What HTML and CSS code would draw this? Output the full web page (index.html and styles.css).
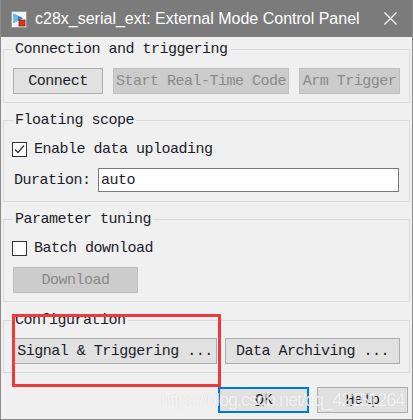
FILE: index.html
```html
<!DOCTYPE html>
<html lang="en">
<head>
    <meta charset="UTF-8">
    <title>External Mode Control Panel</title>
    <link rel="stylesheet" href="styles.css">
</head>
<body>
    <div class="window">
        <div class="titlebar">
            <svg class="app-icon" width="16" height="17" viewBox="0 0 16 17">
                <rect x="0.5" y="0.5" width="15" height="16" fill="#f4f4f4" stroke="#9a9a9a"/>
                <path d="M2.5 2.5 L2.5 12 L12 7.2 Z" fill="#1f7fd0"/>
                <path d="M2.5 2.5 L2.5 12 L7 9.7 L7 4.8 Z" fill="#6ab8f0"/>
                <rect x="8" y="9" width="6" height="6" fill="#e0351c" stroke="#8a2010" stroke-width="0.8"/>
            </svg>
            <span class="title">c28x_serial_ext: External Mode Control Panel</span>
            <svg class="close" width="13" height="13" viewBox="0 0 13 13">
                <path d="M0.5 0.5 L12.5 12.5 M12.5 0.5 L0.5 12.5" stroke="#fff" stroke-width="1.2"/>
            </svg>
        </div>

        <div class="content">
            <fieldset class="group g-connect">
                <legend>Connection and triggering</legend>
                <div class="row spread">
                    <button class="btn w-connect">Connect</button>
                    <button class="btn disabled w-start">Start Real-Time Code</button>
                    <button class="btn disabled w-arm">Arm Trigger</button>
                </div>
            </fieldset>

            <fieldset class="group g-scope">
                <legend>Floating scope</legend>
                <div class="check-row">
                    <span class="box">
                        <svg width="13" height="13" viewBox="0 0 13 13"><path d="M2 6.5 L5 9.5 L11 2.5" fill="none" stroke="#333" stroke-width="1.2"/></svg>
                    </span>
                    <span>Enable data uploading</span>
                </div>
                <div class="row field-row">
                    <label class="field-label" for="duration">Duration:</label>
                    <input class="field" id="duration" type="text" value="auto">
                </div>
            </fieldset>

            <fieldset class="group g-param">
                <legend>Parameter tuning</legend>
                <div class="check-row">
                    <span class="box"></span>
                    <span>Batch download</span>
                </div>
                <div class="row dl-row">
                    <button class="btn disabled w-download">Download</button>
                </div>
            </fieldset>

            <fieldset class="group g-config">
                <legend>Configuration</legend>
                <div class="row spread">
                    <button class="btn w-signal">Signal &amp; Triggering ...</button>
                    <button class="btn w-archive">Data Archiving ...</button>
                </div>
            </fieldset>

            <div class="row footer">
                <button class="btn w-foot focused"><u>O</u>K</button>
                <button class="btn w-foot"><u>H</u>elp</button>
            </div>
        </div>

        <div class="highlight"></div>
        <div class="watermark">https://blog.csdn.net/qq_42151264</div>
    </div>
</body>
</html>
```

FILE: styles.css
```css
body {
    margin: 0;
    padding: 0;
    background-color: #f0f0f0;
}
.window {
    position: relative;
    width: 413px;
    height: 420px;
    box-sizing: border-box;
    border: 1px solid #8c8c8c;
    border-top: none;
    background-color: #f0f0f0;
    overflow: hidden;
    font-family: "Liberation Mono", monospace;
    font-size: 15px;
    letter-spacing: -0.5px;
    color: #1c1c2a;
}
.titlebar {
    display: flex;
    align-items: center;
    height: 37px;
    margin: 0 -1px;
    background-color: #7b7b7b;
    color: #fff;
}
.app-icon {
    margin-left: 11px;
    margin-top: 1px;
}
.title {
    margin-left: 8px;
    font-family: "Liberation Sans", Arial, sans-serif;
    font-size: 16px;
    letter-spacing: 0;
    flex: 1;
}
.close {
    margin-right: 16px;
}
.content {
    padding: 4px 2px 0 2px;
}
.group {
    margin: 0;
    padding: 0 9px;
    border: 1px solid #dcdcdc;
    border-radius: 0;
}
.group legend {
    padding: 1px 2px 0;
    line-height: 16px;
}
.g-scope,
.g-param {
    margin-top: 9px;
}
.g-config {
    margin-top: 10px;
}
.row {
    display: flex;
    align-items: center;
}
.spread {
    justify-content: space-between;
}
.g-connect .row {
    padding: 10px 0 8px;
}
.g-config .row {
    padding: 9px 0 8px;
}
.btn {
    height: 26px;
    padding: 1px 0 0;
    box-sizing: border-box;
    border: 1px solid #adadad;
    background-color: #e1e1e1;
    font-family: inherit;
    font-size: 15px;
    letter-spacing: -0.5px;
    color: #1c1c2a;
    text-align: center;
}
.btn.disabled {
    border-color: #bfbfbf;
    background-color: #cccccc;
    color: #8a8a8a;
}
.btn.focused {
    border: 2px solid #0078d7;
}
.w-connect { width: 90px; }
.w-start { width: 176px; }
.w-arm { width: 101px; }
.w-download { width: 125px; }
.w-signal { width: 204px; }
.w-archive { width: 175px; }
.w-foot { width: 91px; }
.check-row {
    display: flex;
    align-items: center;
    height: 18px;
    margin-top: 11px;
}
.box {
    display: flex;
    align-items: center;
    justify-content: center;
    width: 15px;
    height: 15px;
    box-sizing: border-box;
    margin-left: -1px;
    margin-right: 7px;
    border: 1px solid #333;
    background-color: #fff;
}
.field-row {
    padding: 10px 0 9px;
}
.field-label {
    width: 84px;
    margin-left: 1px;
    padding-top: 1px;
}
.field {
    width: 301px;
    height: 24px;
    box-sizing: border-box;
    margin: 0;
    padding: 1px 2px 0;
    border: 1px solid #7a7a7a;
    background-color: #fff;
    font-family: inherit;
    font-size: 15px;
    letter-spacing: -0.5px;
    color: #1c1c2a;
}
.dl-row {
    padding: 10px 0 8px;
}
.footer {
    justify-content: flex-end;
    gap: 8px;
    padding: 14px 2px 0 0;
}
.highlight {
    position: absolute;
    left: 11px;
    top: 314px;
    width: 209px;
    height: 73px;
    box-sizing: border-box;
    border: 3px solid #ee3a3a;
}
.watermark {
    position: absolute;
    left: 160px;
    top: 390px;
    font-family: "Liberation Sans", Arial, sans-serif;
    font-size: 18px;
    letter-spacing: -1px;
    color: rgba(255, 255, 255, 0.8);
    text-shadow: 0 0 1px rgba(0, 0, 0, 0.15);
    white-space: nowrap;
}
```
